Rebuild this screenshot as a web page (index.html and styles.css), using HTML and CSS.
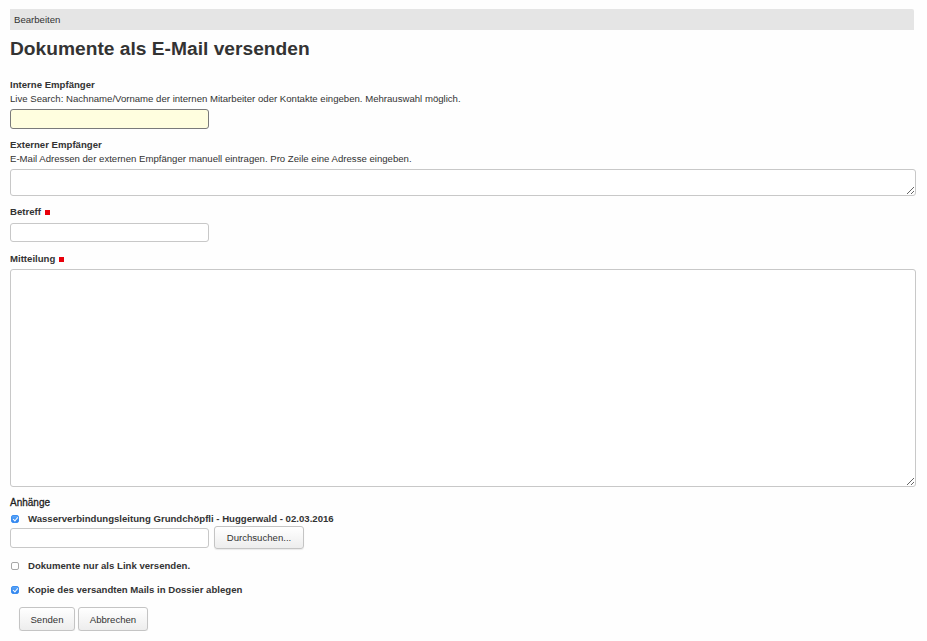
FILE: index.html
```html
<!DOCTYPE html>
<html lang="de">
<head>
<meta charset="utf-8">
<title>Dokumente als E-Mail versenden</title>
<link rel="stylesheet" href="styles.css">
</head>
<body>
<div class="page">
  <div class="tabbar">Bearbeiten</div>
  <h1 class="title">Dokumente als E-Mail versenden</h1>
  <form class="form">
    <div class="field f-intern">
      <label class="label">Interne Empfänger</label>
      <div class="help">Live Search: Nachname/Vorname der internen Mitarbeiter oder Kontakte eingeben. Mehrauswahl möglich.</div>
      <input class="text text-search" type="text">
    </div>
    <div class="field f-extern">
      <label class="label">Externer Empfänger</label>
      <div class="help">E-Mail Adressen der externen Empfänger manuell eintragen. Pro Zeile eine Adresse eingeben.</div>
      <textarea class="area area-small"></textarea>
    </div>
    <div class="field f-betreff">
      <label class="label">Betreff <span class="req"></span></label>
      <input class="text" type="text">
    </div>
    <div class="field f-mitteilung">
      <label class="label">Mitteilung <span class="req"></span></label>
      <textarea class="area area-big"></textarea>
    </div>
    <div class="field f-anhang">
      <div class="label label-medium">Anhänge</div>
      <label class="check"><span class="box checked"></span><span>Wasserverbindungsleitung Grundchöpfli - Huggerwald - 02.03.2016</span></label>
      <div class="file-row">
        <span class="text file-name"></span>
        <span class="btn btn-browse">Durchsuchen...</span>
      </div>
    </div>
    <label class="check opt"><span class="box"></span><span>Dokumente nur als Link versenden.</span></label>
    <label class="check opt"><span class="box checked"></span><span>Kopie des versandten Mails in Dossier ablegen</span></label>
    <div class="actions">
      <span class="btn btn-send">Senden</span>
      <span class="btn btn-cancel">Abbrechen</span>
    </div>
  </form>
</div>
</body>
</html>
```
FILE: styles.css
```css
html, body {
  margin: 0;
  padding: 0;
  background: #fefefe;
}
body {
  font-family: "Liberation Sans", Arial, Helvetica, sans-serif;
  color: #333;
  font-size: 9.6px;
}
.page {
  padding: 9px 13px 0 10px;
}
.tabbar {
  background: #e5e5e5;
  height: 21px;
  line-height: 22px;
  padding-left: 4px;
  font-size: 9.6px;
  color: #333;
  border-radius: 0 2px 0 0;
}
.title {
  margin: 8px 0 0 0;
  font-size: 19.2px;
  line-height: 22px;
  font-weight: bold;
  color: #333;
}
.form {
  display: flex;
  flex-direction: column;
  margin-top: 18px;
}
.field {
  display: flex;
  flex-direction: column;
}
.label {
  font-weight: bold;
  font-size: 9.6px;
  line-height: 14px;
  height: 14px;
  color: #333;
  display: flex;
  align-items: center;
  gap: 4px;
}
.label-medium {
  font-weight: normal;
  font-size: 10px;
  color: #1e1e1e;
  -webkit-text-stroke: 0.3px #1e1e1e;
}
.help {
  font-size: 9.6px;
  line-height: 14px;
  color: #333;
}
.req {
  display: inline-block;
  width: 5px;
  height: 5px;
  background: #e8000b;
  margin-top: 1px;
}
.text {
  display: block;
  box-sizing: border-box;
  width: 199px;
  height: 20px;
  border: 1px solid #c8c8c8;
  border-radius: 3px;
  background: #fff;
  margin: 0;
  padding: 0 3px;
  font: inherit;
}
.text-search {
  background: #fffedf;
  border-color: #7a7a7a;
  margin-top: 3px;
}
.area {
  display: block;
  box-sizing: border-box;
  width: 906px;
  border: 1px solid #c8c8c8;
  border-radius: 3px;
  background: #fff;
  margin: 0;
  font: inherit;
  resize: vertical;
}
.area-small { height: 27px; margin-top: 3px; }
.area-big { height: 218px; margin-top: 3px; }
.f-extern { margin-top: 9px; }
.f-betreff { margin-top: 9px; }
.f-betreff .text { margin-top: 4px; height: 19px; }
.f-mitteilung { margin-top: 10px; }
.f-anhang { margin-top: 9px; }
.check {
  display: flex;
  align-items: center;
  gap: 9px;
  font-weight: bold;
  font-size: 9.6px;
  line-height: 14px;
  height: 14px;
  color: #333;
  padding-left: 1px;
}
.f-anhang .check { margin-top: 2px; }
.box {
  box-sizing: border-box;
  width: 8px;
  height: 8px;
  border: 1px solid #a8a8a8;
  border-radius: 2px;
  background: #fff;
  position: relative;
  flex: none;
}
.box.checked {
  background: linear-gradient(#5aa5f7, #2f83ee);
  border-color: #3d8ff2;
}
.box.checked::after {
  content: "";
  position: absolute;
  left: 2px;
  top: 0;
  width: 1.5px;
  height: 4px;
  border: solid #fff;
  border-width: 0 1.2px 1.2px 0;
  transform: rotate(40deg);
}
.file-row {
  display: flex;
  align-items: center;
  gap: 5px;
  margin-top: 0;
}
.btn {
  display: inline-flex;
  align-items: center;
  justify-content: center;
  box-sizing: border-box;
  height: 24px;
  padding: 0;
  border: 1px solid #c4c4c4;
  border-radius: 3px;
  background: linear-gradient(#ffffff, #ededed);
  box-shadow: 0 1px 1px rgba(0,0,0,0.08);
  font-size: 9.6px;
  color: #333;
}
.btn-browse { width: 90px; height: 23px; }
.opt { margin-top: 10px; }
.actions {
  display: flex;
  gap: 3px;
  margin-top: 10px;
  padding-left: 9px;
}
.btn-send { width: 56px; }
.btn-cancel { width: 70px; }
```
